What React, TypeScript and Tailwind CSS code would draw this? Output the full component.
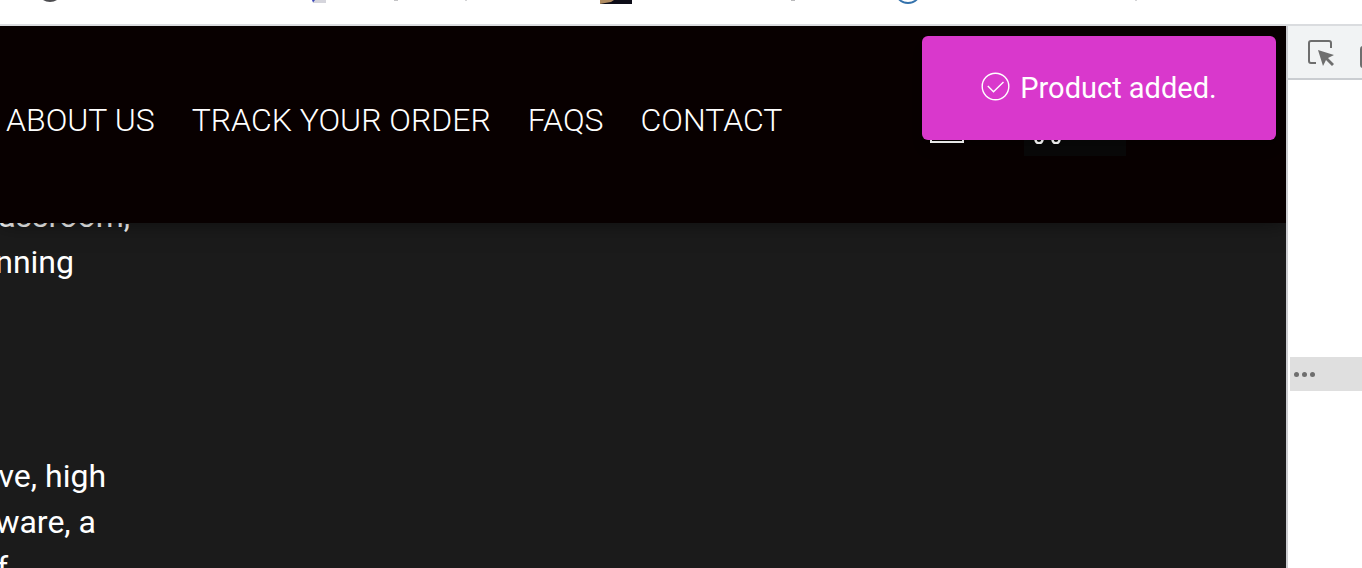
const navLinks = ["About us", "Track your order", "FAQs", "Contact"];

const BookmarksBar = () => {
  return (
    <div className="flex h-[26px] shrink-0 items-start border-b-2 border-[#dadcdf] bg-white pl-[39px]">
      <svg width="22" height="4" viewBox="0 0 22 4" className="shrink-0">
        <circle cx="11" cy="-11" r="13" fill="#4d4d50" />
      </svg>
      <svg width="16" height="4" viewBox="0 0 16 4" className="ml-[251px] shrink-0">
        <path d="M1 0h13v3H1z" fill="#d5d5dc" />
        <path d="M0 0h3L1 2.6z" fill="#3c48b8" />
      </svg>
      <div className="ml-[66px] h-px w-1 shrink-0 bg-[#c4c4c6]" />
      <div className="ml-[67px] h-px w-0.5 shrink-0 bg-[#d4d4d6]" />
      <svg width="32" height="4" viewBox="0 0 32 4" className="ml-[133px] shrink-0">
        <path d="M0 0h32v4H0z" fill="#0d0d18" />
        <path d="M0 0h14l-3 2-6 1-5 1z" fill="#b08c62" />
      </svg>
      <div className="ml-[159px] h-px w-1 shrink-0 bg-[#b9b9bb]" />
      <svg width="26" height="5" viewBox="0 0 26 5" className="ml-[100px] shrink-0">
        <circle cx="13" cy="-10" r="13" fill="#fff" stroke="#3472ac" strokeWidth="1.8" />
      </svg>
      <div className="ml-[214px] h-px w-0.5 shrink-0 bg-[#d4d4d6]" />
    </div>
  );
};

const Toast = () => {
  return (
    <div
      role="status"
      className="absolute top-2.5 right-2.5 z-20 flex h-[104px] w-[354px] items-center justify-center gap-2.5 rounded-md bg-[#d938cc] text-white shadow-lg"
    >
      <svg
        width="29"
        height="29"
        viewBox="0 0 29 29"
        fill="none"
        stroke="currentColor"
        strokeWidth="1.4"
        className="-mt-1 shrink-0"
      >
        <circle cx="14.5" cy="14.5" r="13.3" />
        <path d="m6.8 14 5.7 5.8L22.5 10" />
      </svg>
      <p className="text-[29px] leading-9">Product added.</p>
    </div>
  );
};

const Header = () => {
  return (
    <header className="relative z-10 flex h-[197px] shrink-0 items-center justify-between bg-[#080000] pr-40 pl-1.5 shadow-[0_0_20px_rgba(0,0,0,0.5)]">
      <nav className="-mt-2.5 flex gap-[37px] text-[32px] leading-10 font-light whitespace-nowrap text-white uppercase">
        {navLinks.map((link) => (
          <a key={link} href="#">
            {link}
          </a>
        ))}
      </nav>

      <div className="-mt-0.5 flex items-center gap-15">
        <button type="button" aria-label="Account" className="text-white">
          <svg width="34" height="38" viewBox="0 0 34 38" fill="none" stroke="currentColor" strokeWidth="2">
            <circle cx="17" cy="9" r="7" />
            <path d="M1 37v-8c0-5 7-8 16-8s16 3 16 8v8z" />
          </svg>
        </button>
        <button
          type="button"
          aria-label="Cart"
          className="h-16 w-[102px] bg-[#090909] pl-1.5 text-white"
        >
          <svg width="36" height="40" viewBox="0 0 36 40" fill="none" stroke="currentColor" strokeWidth="2.4">
            <path d="M0 5h6l5 20h18l5-15H8" />
            <circle cx="9" cy="35.5" r="3.6" />
            <circle cx="26" cy="35.5" r="3.6" />
          </svg>
        </button>
      </div>
    </header>
  );
};

const Description = () => {
  return (
    <main className="-mt-[30px] flex flex-1 flex-col gap-[168px] bg-[#1b1b1b] text-[32px] leading-[46px] whitespace-nowrap text-white">
      <div>
        <p className="flex w-[130px] justify-end">assroom,</p>
        <p className="flex w-[74px] justify-end">nning</p>
      </div>
      <div>
        <p className="flex w-[106px] justify-end">ve, high</p>
        <p className="flex w-24 justify-end">ware, a</p>
        <p className="flex w-2 justify-end">f</p>
      </div>
    </main>
  );
};

const DevTools = () => {
  return (
    <aside className="flex w-[76px] shrink-0 flex-col border-l-2 border-[#cccdd1] bg-white">
      <div className="flex h-[54px] items-center overflow-hidden border-b-2 border-[#cacdd1] bg-[#f1f3f4] pt-0.5 pl-5 text-[#6e6e6e]">
        <button type="button" aria-label="Inspect element" className="shrink-0">
          <svg width="26" height="26" viewBox="0 0 26 26" className="block">
            <path
              d="M8 23H3a2 2 0 0 1-2-2V3a2 2 0 0 1 2-2h18a2 2 0 0 1 2 2v5"
              fill="none"
              stroke="currentColor"
              strokeWidth="2"
            />
            <path d="m10 10 16 5-6 3 6 6-2 2-6-6-3 6z" fill="currentColor" />
          </svg>
        </button>
        <button type="button" aria-label="Toggle device toolbar" className="ml-[26px] shrink-0">
          <svg width="16" height="22" viewBox="0 0 16 22" className="mt-2 block">
            <rect x="1" y="1" width="14" height="20" rx="2" fill="none" stroke="currentColor" strokeWidth="2" />
          </svg>
        </button>
      </div>
      <div className="mt-[277px] ml-0.5 flex h-[34px] items-center gap-[3px] bg-[#dfdfdf] pl-1">
        <span className="size-[5px] rounded-full bg-[#6e6e6e]" />
        <span className="size-[5px] rounded-full bg-[#6e6e6e]" />
        <span className="size-[5px] rounded-full bg-[#6e6e6e]" />
      </div>
    </aside>
  );
};

const App = () => {
  return (
    <div className="flex h-screen flex-col overflow-hidden bg-white font-['Roboto',sans-serif]">
      <BookmarksBar />
      <div className="flex min-h-0 flex-1">
        <div className="relative flex min-w-0 flex-1 flex-col overflow-hidden">
          <Toast />
          <Header />
          <Description />
        </div>
        <DevTools />
      </div>
    </div>
  );
};

export default App;
